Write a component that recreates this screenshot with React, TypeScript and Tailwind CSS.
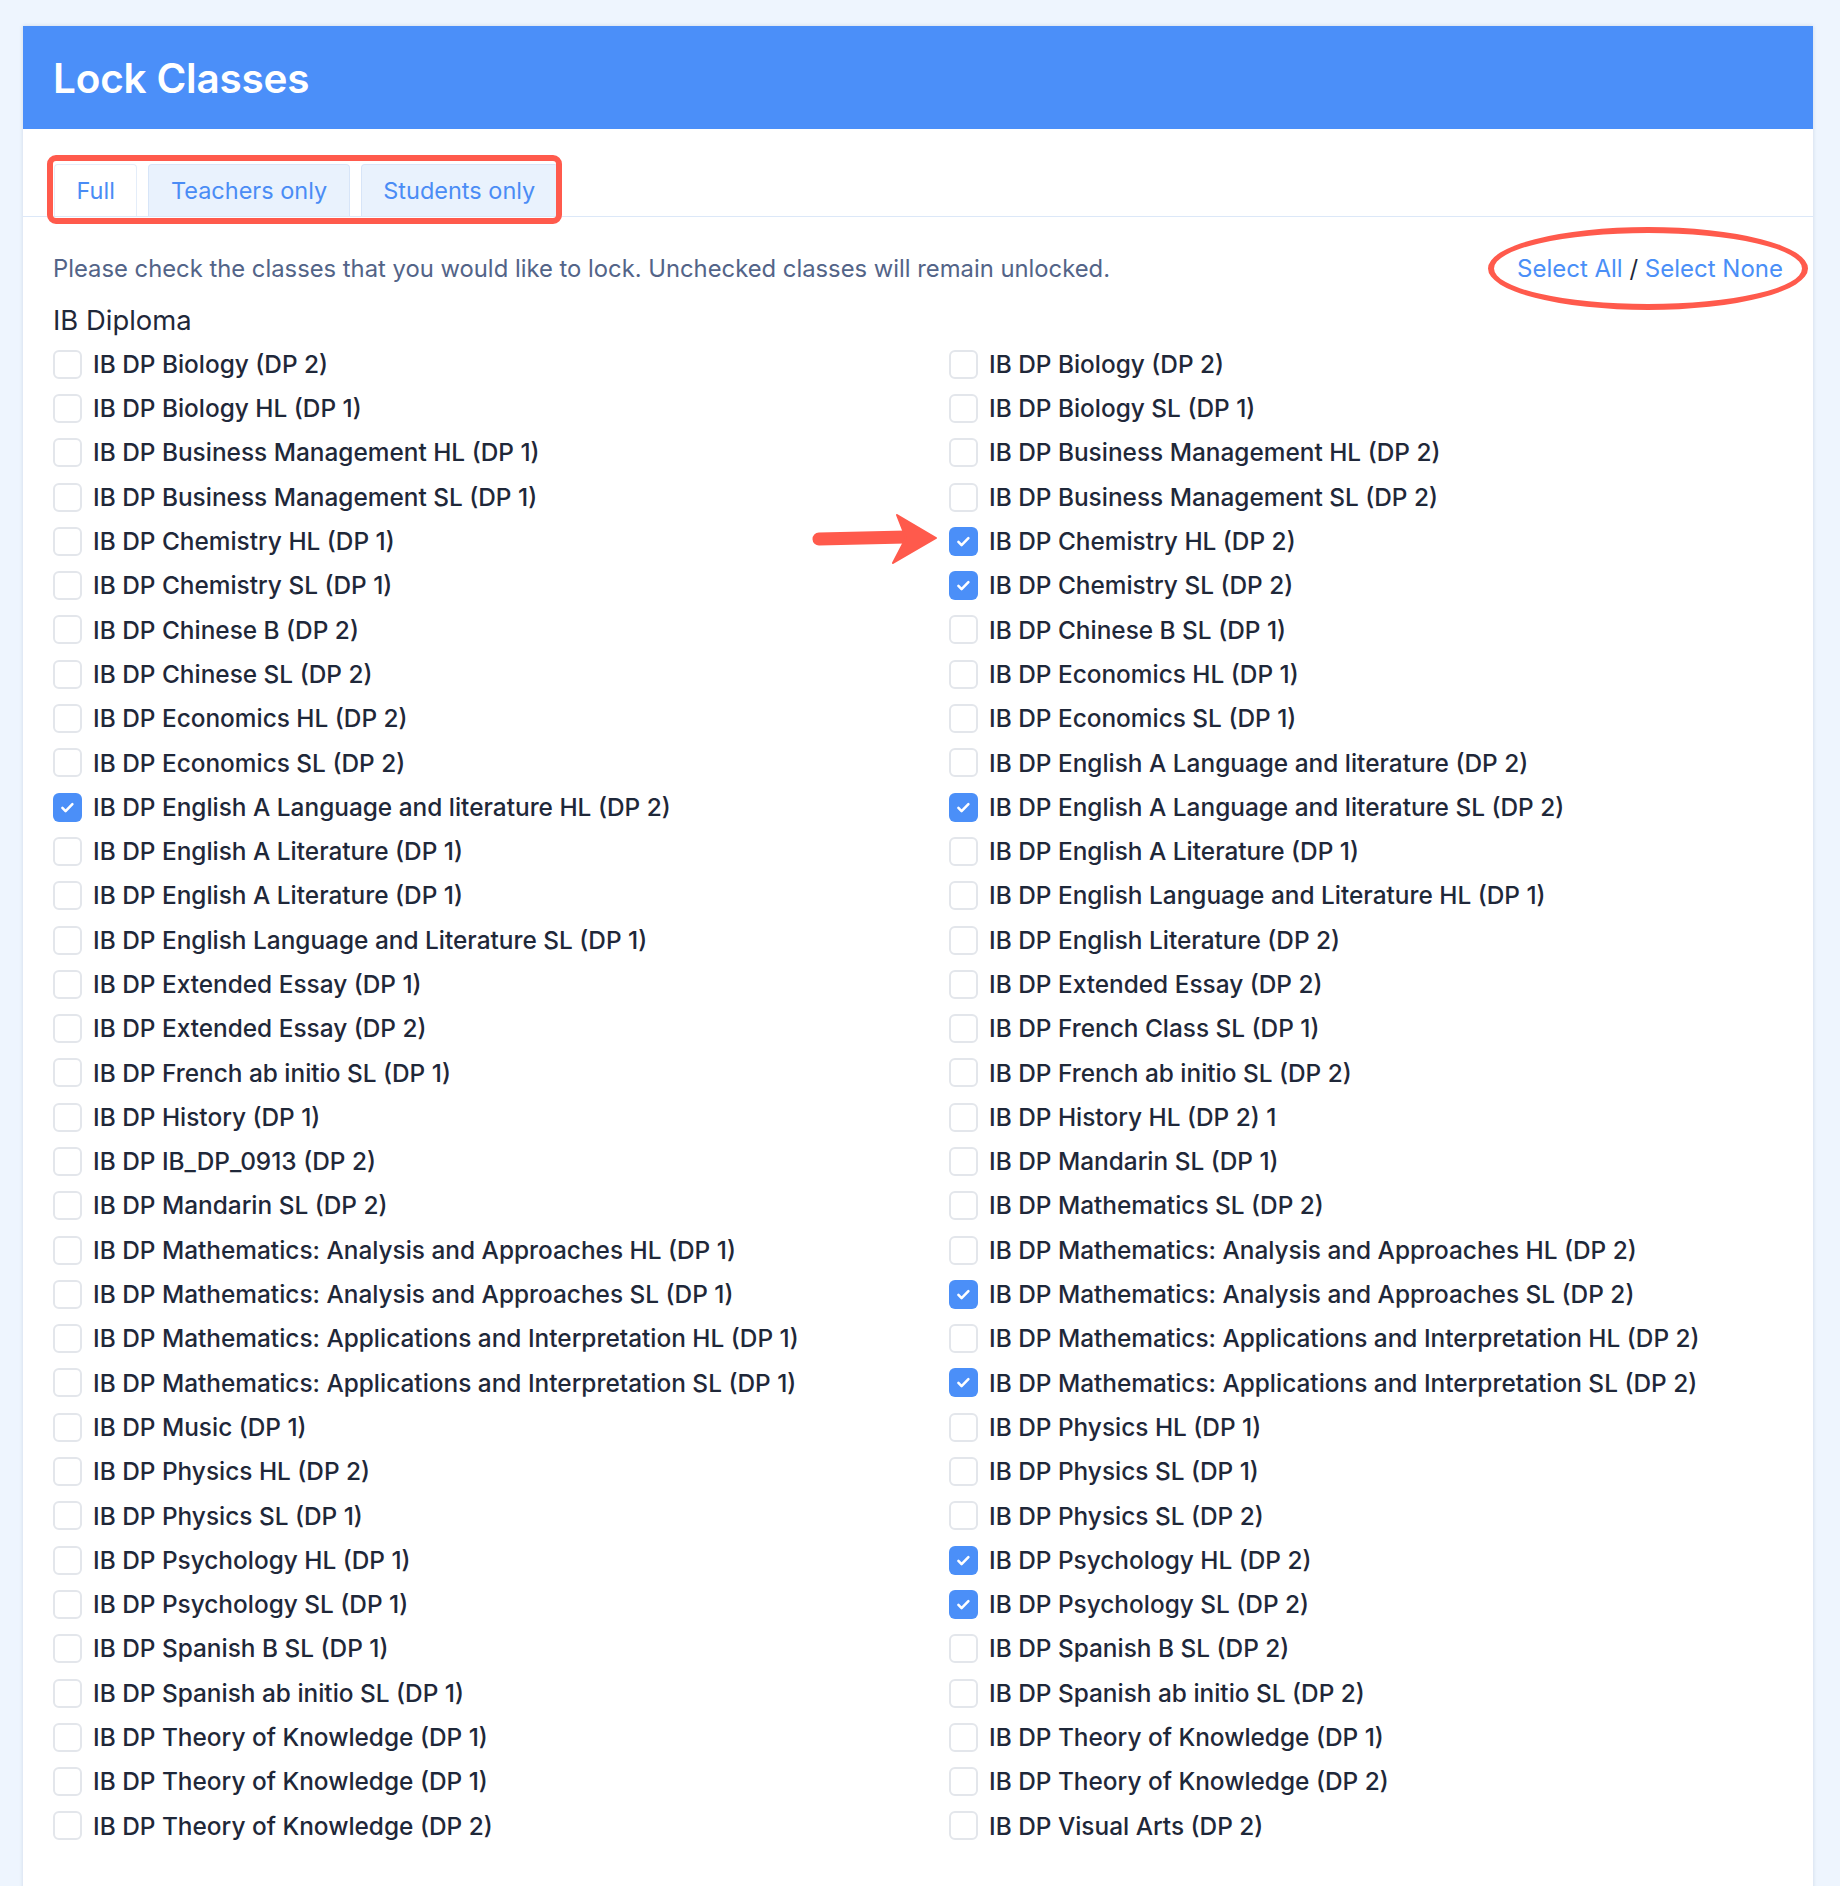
import React from "react";

type ClassItem = { name: string; checked?: boolean };

const leftColumn: ClassItem[] = [
  { name: "IB DP Biology (DP 2)" },
  { name: "IB DP Biology HL (DP 1)" },
  { name: "IB DP Business Management HL (DP 1)" },
  { name: "IB DP Business Management SL (DP 1)" },
  { name: "IB DP Chemistry HL (DP 1)" },
  { name: "IB DP Chemistry SL (DP 1)" },
  { name: "IB DP Chinese B (DP 2)" },
  { name: "IB DP Chinese SL (DP 2)" },
  { name: "IB DP Economics HL (DP 2)" },
  { name: "IB DP Economics SL (DP 2)" },
  { name: "IB DP English A Language and literature HL (DP 2)", checked: true },
  { name: "IB DP English A Literature (DP 1)" },
  { name: "IB DP English A Literature (DP 1)" },
  { name: "IB DP English Language and Literature SL (DP 1)" },
  { name: "IB DP Extended Essay (DP 1)" },
  { name: "IB DP Extended Essay (DP 2)" },
  { name: "IB DP French ab initio SL (DP 1)" },
  { name: "IB DP History (DP 1)" },
  { name: "IB DP IB_DP_0913 (DP 2)" },
  { name: "IB DP Mandarin SL (DP 2)" },
  { name: "IB DP Mathematics: Analysis and Approaches HL (DP 1)" },
  { name: "IB DP Mathematics: Analysis and Approaches SL (DP 1)" },
  { name: "IB DP Mathematics: Applications and Interpretation HL (DP 1)" },
  { name: "IB DP Mathematics: Applications and Interpretation SL (DP 1)" },
  { name: "IB DP Music (DP 1)" },
  { name: "IB DP Physics HL (DP 2)" },
  { name: "IB DP Physics SL (DP 1)" },
  { name: "IB DP Psychology HL (DP 1)" },
  { name: "IB DP Psychology SL (DP 1)" },
  { name: "IB DP Spanish B SL (DP 1)" },
  { name: "IB DP Spanish ab initio SL (DP 1)" },
  { name: "IB DP Theory of Knowledge (DP 1)" },
  { name: "IB DP Theory of Knowledge (DP 1)" },
  { name: "IB DP Theory of Knowledge (DP 2)" },
];

const rightColumn: ClassItem[] = [
  { name: "IB DP Biology (DP 2)" },
  { name: "IB DP Biology SL (DP 1)" },
  { name: "IB DP Business Management HL (DP 2)" },
  { name: "IB DP Business Management SL (DP 2)" },
  { name: "IB DP Chemistry HL (DP 2)", checked: true },
  { name: "IB DP Chemistry SL (DP 2)", checked: true },
  { name: "IB DP Chinese B SL (DP 1)" },
  { name: "IB DP Economics HL (DP 1)" },
  { name: "IB DP Economics SL (DP 1)" },
  { name: "IB DP English A Language and literature (DP 2)" },
  { name: "IB DP English A Language and literature SL (DP 2)", checked: true },
  { name: "IB DP English A Literature (DP 1)" },
  { name: "IB DP English Language and Literature HL (DP 1)" },
  { name: "IB DP English Literature (DP 2)" },
  { name: "IB DP Extended Essay (DP 2)" },
  { name: "IB DP French Class SL (DP 1)" },
  { name: "IB DP French ab initio SL (DP 2)" },
  { name: "IB DP History HL (DP 2) 1" },
  { name: "IB DP Mandarin SL (DP 1)" },
  { name: "IB DP Mathematics SL (DP 2)" },
  { name: "IB DP Mathematics: Analysis and Approaches HL (DP 2)" },
  { name: "IB DP Mathematics: Analysis and Approaches SL (DP 2)", checked: true },
  { name: "IB DP Mathematics: Applications and Interpretation HL (DP 2)" },
  { name: "IB DP Mathematics: Applications and Interpretation SL (DP 2)", checked: true },
  { name: "IB DP Physics HL (DP 1)" },
  { name: "IB DP Physics SL (DP 1)" },
  { name: "IB DP Physics SL (DP 2)" },
  { name: "IB DP Psychology HL (DP 2)", checked: true },
  { name: "IB DP Psychology SL (DP 2)", checked: true },
  { name: "IB DP Spanish B SL (DP 2)" },
  { name: "IB DP Spanish ab initio SL (DP 2)" },
  { name: "IB DP Theory of Knowledge (DP 1)" },
  { name: "IB DP Theory of Knowledge (DP 2)" },
  { name: "IB DP Visual Arts (DP 2)" },
];

function Checkbox({ checked }: { checked?: boolean }) {
  if (checked) {
    return (
      <span className="flex h-[29px] w-[29px] shrink-0 items-center justify-center rounded-[6px] bg-[#4b8ff8]">
        <svg width="17" height="17" viewBox="0 0 16 16" fill="none" aria-hidden>
          <path d="M3.2 8.4l3 3 6.4-6.6" stroke="white" strokeWidth="2.4" strokeLinecap="round" strokeLinejoin="round" />
        </svg>
      </span>
    );
  }
  return <span className="h-[29px] w-[29px] shrink-0 rounded-[6px] border-2 border-[#e3e6eb] bg-white" />;
}

function ClassRow({ item }: { item: ClassItem }) {
  return (
    <label className="flex h-[44.3px] items-center gap-[11px]">
      <Checkbox checked={item.checked} />
      <span className="whitespace-nowrap text-[24.4px] font-medium text-[#1f2839]">{item.name}</span>
    </label>
  );
}

const tabClass =
  "flex h-[52px] items-center rounded-t-[4px] border border-b-0 px-[21.5px] text-[23.5px] text-[#4a8cf5]";

export default function App() {
  const rows = leftColumn.flatMap((item, i) => [item, rightColumn[i]]);

  return (
    <div className="min-h-screen overflow-hidden bg-[#eef5fe] pl-[23px] pr-[27px] pt-[26px] font-['Inter','Noto_Sans',sans-serif]">
      <div className="bg-white pb-[80px] shadow-[0_0_4px_rgba(30,60,110,0.15)]">
        <div className="flex h-[103px] items-center bg-[#4b8ff9] px-[30px] pt-[3px]">
          <h1 className="text-[40.5px] font-semibold tracking-[-0.2px] text-white">Lock Classes</h1>
        </div>

        <div className="border-b border-[#dce8f8] pl-[31px] pt-[35px]">
          <div className="relative flex gap-[11px]">
            <button className={`${tabClass} border-[#e4edf9] bg-white`}>Full</button>
            <button className={`${tabClass} border-[#d7e5f8] bg-[#e9f2fd]`}>Teachers only</button>
            <button className={`${tabClass} border-[#d7e5f8] bg-[#e9f2fd]`}>Students only</button>
            <div className="pointer-events-none absolute left-[-7px] top-[-9px] h-[69px] w-[515px] rounded-[9px] border-[6px] border-[#ff5a4c]" />
          </div>
        </div>

        <div className="px-[30px] pt-[36px]">
          <div className="relative flex h-[32px] items-center justify-between">
            <p className="text-[23.8px] text-[#536488]">
              Please check the classes that you would like to lock. Unchecked classes will remain unlocked.
            </p>
            <div className="text-[24px] text-[#4a8ff7]">
              <a className="cursor-pointer">Select All</a>
              <span className="text-[#1f2839]"> / </span>
              <a className="cursor-pointer">Select None</a>
            </div>
            <div className="pointer-events-none absolute left-[1435px] top-[-26px] h-[83px] w-[320px] rounded-[50%] border-[6px] border-[#ff5a4c]" />
          </div>

          <h2 className="mt-[18px] flex h-[36px] items-center text-[27.4px] text-[#1f2839]">IB Diploma</h2>

          <div className="relative mt-[3px] grid grid-cols-2 gap-x-[62px]">
            {rows.map((item, i) => (
              <ClassRow key={i} item={item} />
            ))}
            <svg
              className="pointer-events-none absolute left-[749px] top-[168px]"
              width="140"
              height="58"
              viewBox="0 0 140 58"
              fill="none"
              aria-hidden
            >
              <path d="M17 29 L104 27" stroke="#ff5a4c" strokeWidth="13" strokeLinecap="round" />
              <path d="M95 5 L134 28 L91 53 L104 28 Z" fill="#ff5a4c" strokeLinejoin="round" stroke="#ff5a4c" strokeWidth="2" />
            </svg>
          </div>
        </div>
      </div>
    </div>
  );
}
